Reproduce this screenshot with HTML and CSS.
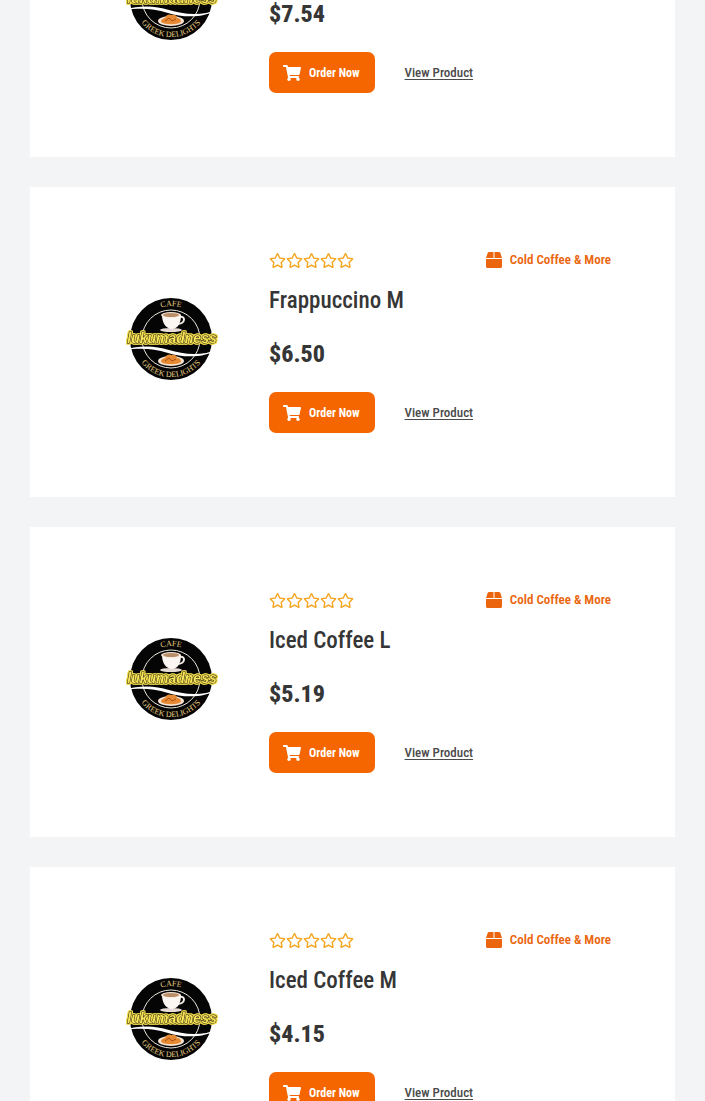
FILE: index.html
```
<!DOCTYPE html>
<html lang="en">

<head>
  <meta charset="UTF-8">
  <title>Lukumadness - Menu</title>
  <meta name="viewport" content="width=device-width, initial-scale=1.0">
  <link rel="stylesheet" href="styles.css">
</head>

<body>
  <!-- Shared icons -->
  <svg class="sprite" aria-hidden="true">
    <symbol id="icon-star" viewBox="0 0 576 512">
      <path d="M528.1 171.5L382 150.2 316.7 17.8c-11.700-23.600-45.600-23.900-57.400 0L194 150.200 47.900 171.500c-26.200 3.800-36.700 36.100-17.700 54.600l105.700 103-25 145.500c-4.500 26.300 23.200 46 46.400 33.700L288 439.600l130.700 68.700c23.200 12.200 50.900-7.400 46.400-33.700l-25-145.500 105.700-103c19-18.500 8.500-50.800-17.700-54.600zM388.600 312.300l23.700 138.400L288 385.400l-124.300 65.300 23.700-138.400-100.600-98 139-20.200 62.200-126 62.200 126 139 20.200-100.600 98z" />
    </symbol>
    <symbol id="icon-cart" viewBox="0 0 576 512">
      <path d="M528.12 301.319l47.273-208C578.806 78.301 567.391 64 551.990 64H159.208l-9.166-44.810C147.758 8.021 137.930 0 126.529 0H24C10.745 0 0 10.745 0 24v16c0 13.255 10.745 24 24 24h69.883l70.248 343.435C147.325 417.100 136 435.222 136 456c0 30.928 25.072 56 56 56s56-25.072 56-56c0-15.674-6.447-29.835-16.824-40h209.647C430.447 426.165 424 440.326 424 456c0 30.928 25.072 56 56 56s56-25.072 56-56c0-22.172-12.888-41.332-31.579-50.405l5.517-24.276c3.413-15.018-8.002-29.319-23.403-29.319H218.117l-6.545-32h293.145c11.206 0 20.920-7.754 23.403-18.681z" />
    </symbol>
    <symbol id="icon-box" viewBox="0 0 512 512">
      <path d="M509.500 184.600L458.900 32.800C452.400 13.200 434.100 0 413.400 0H272v192h238.700c-.4-2.500-.4-5-1.200-7.400zM240 0H98.600c-20.700 0-39 13.200-45.500 32.800L2.500 184.600c-.8 2.400-.8 4.900-1.200 7.400H240V0zM0 224v240c0 26.500 21.500 48 48 48h416c26.500 0 48-21.500 48-48V224H0z" />
    </symbol>
    <symbol id="stars" viewBox="0 0 85 17">
      <use href="#icon-star" x="0" y="1" width="17" height="15" />
      <use href="#icon-star" x="17" y="1" width="17" height="15" />
      <use href="#icon-star" x="34" y="1" width="17" height="15" />
      <use href="#icon-star" x="51" y="1" width="17" height="15" />
      <use href="#icon-star" x="68" y="1" width="17" height="15" />
    </symbol>
    <symbol id="logo" viewBox="2 0 100 92">
      <path id="arc-top" d="M18 43a33 33 0 0 1 66 0" fill="none" />
      <path id="arc-bottom" d="M13 43a38 38 0 0 0 76 0" fill="none" />
      <circle cx="51" cy="43" r="41" fill="#050505" />
      <circle cx="51" cy="43" r="29" fill="none" stroke="#e9e6dc" stroke-width="1" />
      <!-- cup -->
      <ellipse cx="51" cy="34" rx="11" ry="2" fill="#e7ddd6" />
      <path d="M59 21c7-2 7 7-2 7" fill="none" stroke="#f4ece6" stroke-width="2" />
      <path d="M42 19h19c0 9-4 14-9 14s-10-5-10-14z" fill="#fbf6f1" />
      <ellipse cx="51" cy="19" rx="10" ry="3" fill="#f5e8dc" />
      <ellipse cx="51" cy="19" rx="8" ry="2" fill="#b98d68" />
      <!-- ribbon -->
      <path d="M4 54c17-5 31-4 45 0s31 7 50-1c-14 9-35 9-51 4s-28-5-44-3z" fill="#fff" />
      <!-- plate -->
      <ellipse cx="51" cy="65" rx="13" ry="5" fill="#f6e3d2" />
      <path d="M41 66c0-3 3-4 4-4 1-4 5-4 7-3 3-1 5 1 5 3 3 0 4 2 4 4-4 3-16 3-20 0z" fill="#e58a32" />
      <path d="M45 65l4-3 3 3 4-2" fill="none" stroke="#a84d12" stroke-width="1" />
      <text class="logo-arc"><textPath href="#arc-top" startOffset="50%" text-anchor="middle">CAFE</textPath></text>
      <text class="logo-arc"><textPath href="#arc-bottom" startOffset="50%" text-anchor="middle">GREEK DELIGHTS</textPath></text>
      <text class="logo-name" x="52" y="47" text-anchor="middle">lukumadness</text>
    </symbol>
  </svg>

  <main class="product-list">
    <article class="product-card">
      <svg class="product-logo" role="img" aria-label="Lukumadness cafe"><use href="#logo" /></svg>
      <div class="product-info">
        <div class="product-meta">
          <svg class="stars" role="img" aria-label="No ratings yet"><use href="#stars" /></svg>
          <a class="category" href="#"><svg class="box-icon"><use href="#icon-box" /></svg>Cold Coffee &amp; More</a>
        </div>
        <h2>Frappuccino L</h2>
        <p class="price">$7.54</p>
        <div class="actions">
          <button type="button" class="order-btn"><svg class="cart-icon"><use href="#icon-cart" /></svg>Order Now</button>
          <a class="view-link" href="#">View Product</a>
        </div>
      </div>
    </article>

    <article class="product-card">
      <svg class="product-logo" role="img" aria-label="Lukumadness cafe"><use href="#logo" /></svg>
      <div class="product-info">
        <div class="product-meta">
          <svg class="stars" role="img" aria-label="No ratings yet"><use href="#stars" /></svg>
          <a class="category" href="#"><svg class="box-icon"><use href="#icon-box" /></svg>Cold Coffee &amp; More</a>
        </div>
        <h2>Frappuccino M</h2>
        <p class="price">$6.50</p>
        <div class="actions">
          <button type="button" class="order-btn"><svg class="cart-icon"><use href="#icon-cart" /></svg>Order Now</button>
          <a class="view-link" href="#">View Product</a>
        </div>
      </div>
    </article>

    <article class="product-card">
      <svg class="product-logo" role="img" aria-label="Lukumadness cafe"><use href="#logo" /></svg>
      <div class="product-info">
        <div class="product-meta">
          <svg class="stars" role="img" aria-label="No ratings yet"><use href="#stars" /></svg>
          <a class="category" href="#"><svg class="box-icon"><use href="#icon-box" /></svg>Cold Coffee &amp; More</a>
        </div>
        <h2>Iced Coffee L</h2>
        <p class="price">$5.19</p>
        <div class="actions">
          <button type="button" class="order-btn"><svg class="cart-icon"><use href="#icon-cart" /></svg>Order Now</button>
          <a class="view-link" href="#">View Product</a>
        </div>
      </div>
    </article>

    <article class="product-card">
      <svg class="product-logo" role="img" aria-label="Lukumadness cafe"><use href="#logo" /></svg>
      <div class="product-info">
        <div class="product-meta">
          <svg class="stars" role="img" aria-label="No ratings yet"><use href="#stars" /></svg>
          <a class="category" href="#"><svg class="box-icon"><use href="#icon-box" /></svg>Cold Coffee &amp; More</a>
        </div>
        <h2>Iced Coffee M</h2>
        <p class="price">$4.15</p>
        <div class="actions">
          <button type="button" class="order-btn"><svg class="cart-icon"><use href="#icon-cart" /></svg>Order Now</button>
          <a class="view-link" href="#">View Product</a>
        </div>
      </div>
    </article>
  </main>
</body>

</html>
```
FILE: styles.css
```
/* General Styles */
* {
  box-sizing: border-box;
}

body {
  margin: 0;
  height: 100vh;
  overflow: hidden;
  background-color: #f3f4f6;
  color: #363636;
  font-family: "Roboto Condensed", "Liberation Sans Narrow", "Liberation Sans", sans-serif;
}

.sprite {
  position: absolute;
  width: 0;
  height: 0;
}

/* Product list */
.product-list {
  display: flex;
  flex-direction: column;
  gap: 30px;
  padding: 0 30px;
  margin-top: -153px;
}

.product-card {
  display: grid;
  grid-template-columns: 30% 1fr;
  align-items: center;
  column-gap: 20px;
  padding: 64px;
  background: #ffffff;
}

.product-logo {
  width: 100px;
  height: 92px;
  justify-self: center;
}

.product-meta {
  display: flex;
  justify-content: space-between;
  align-items: center;
  height: 18px;
  margin-bottom: 16px;
}

.stars {
  width: 85px;
  height: 17px;
  fill: #f5a623;
}

.category {
  display: flex;
  align-items: center;
  gap: 8px;
  color: #ea650d;
  font-size: 13px;
  font-weight: 600;
  line-height: 18px;
  text-decoration: none;
}

.box-icon {
  width: 16px;
  height: 16px;
  fill: #ea650d;
}

h2 {
  margin: 0 0 20px;
  font-size: 23px;
  font-weight: 500;
  line-height: 32px;
}

.price {
  margin: 0 0 21px;
  font-size: 24px;
  font-weight: 800;
  line-height: 34px;
}

.actions {
  display: flex;
  align-items: center;
  gap: 30px;
}

.order-btn {
  display: flex;
  align-items: center;
  gap: 8px;
  height: 41px;
  padding: 0 15px 0 14px;
  border: none;
  border-radius: 7px;
  background-color: #f56600;
  color: #ffffff;
  font-family: inherit;
  font-size: 12px;
  font-weight: 700;
  cursor: pointer;
}

.cart-icon {
  width: 18px;
  height: 16px;
  fill: #ffffff;
}

.view-link {
  color: #4a4a4a;
  font-size: 13px;
  font-weight: 500;
  text-underline-offset: 2px;
}

/* Logo lettering */
.logo-arc {
  fill: #e9cf82;
  font-family: "Liberation Serif", serif;
  font-size: 8px;
}

.logo-name {
  fill: #f7e45a;
  stroke: #15130a;
  stroke-width: 1px;
  paint-order: stroke;
  font-family: "Liberation Sans", sans-serif;
  font-size: 14px;
  font-style: italic;
  font-weight: 700;
  filter: drop-shadow(1px 0 0 #f2dc4c) drop-shadow(-1px 0 0 #f2dc4c) drop-shadow(0 1px 0 #f2dc4c) drop-shadow(0 -1px 0 #f2dc4c);
}
```
